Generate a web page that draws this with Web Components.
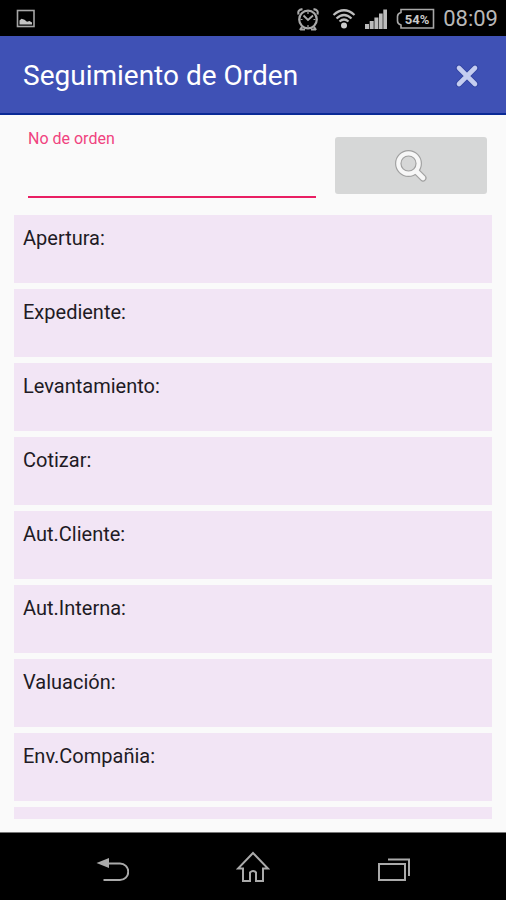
<!DOCTYPE html>
<html lang="es">
<head>
<meta charset="utf-8">
<meta name="viewport" content="width=device-width, initial-scale=1">
<title>Seguimiento de Orden</title>
<style>
  html, body { margin: 0; height: 100%; }
  body { font-family: Roboto, "Liberation Sans", sans-serif; background: #fafafa; color: #211a24; }
</style>
</head>
<body>
<order-app></order-app>
<script>
const define = (name, html, setup) => {
  const template = document.createElement('template');
  template.innerHTML = html;
  customElements.define(name, class extends HTMLElement {
    constructor() {
      super();
      this.attachShadow({ mode: 'open' }).append(template.content.cloneNode(true));
    }
    connectedCallback() { if (setup) setup(this, this.shadowRoot); }
  });
};

define('status-bar', `
<style>
  :host { display: flex; align-items: center; justify-content: space-between; height: 36px; padding: 1px 8px 0 16px; background: #000; color: #b8b8b8; flex: none; box-sizing: border-box; }
  div { display: flex; align-items: center; }
  svg { display: block; flex: none; }
  .right { gap: 8px; }
  time { font-size: 22px; line-height: 35px; }
</style>
<svg width="20" height="20" viewBox="0 0 20 20" aria-hidden="true"><rect x="1.5" y="1.5" width="16.5" height="16" fill="none" stroke="#a6a6a6" stroke-width="1.6"/><path d="M3.5 15.500v-4l2-1.800 3 1 2.500 2 2.500-.8 2.500 1.700v2z" fill="#c4c4c4"/></svg>
<div class="right">
  <svg width="24" height="24" viewBox="0 0 24 24" fill="none" stroke="#a8a8a8" stroke-width="2.200" aria-hidden="true"><circle cx="12" cy="12.500" r="8.800"/><path d="M2.500 7.500Q1 3 6.500 2.200M21.500 7.500Q23 3 17.500 2.200M6 20l-2 3M18 20l2 3M4 22.500h5M15 22.500h5"/><path d="M7.500 8.500l4.500 4.500 5-4.500" stroke-width="1.800"/><path d="M12 5v2M12 18v2M4.500 12.500h2M17.500 12.500h2" stroke-width="1.200"/></svg>
  <svg style="margin-left:4px" width="24" height="22" viewBox="0 0 24 22" fill="none" stroke="#bcbcbc" stroke-width="2.200" aria-hidden="true"><path d="M1.500 7Q12-2.500 22.500 7M4.500 10.500Q12 3.500 19.500 10.500M7.500 13.500Q12 9.500 16.500 13.500"/><circle cx="12" cy="17.500" r="3" fill="#ccc" stroke="none"/></svg>
  <svg width="24" height="22" viewBox="0 0 24 22" fill="#bcbcbc" aria-hidden="true"><path d="M1 16h4v5H1zM5.700 13h4v8h-4zM10.400 9.500h4V21h-4zM15 5.500h3.700V21H15zM19.300 1.500H23V21h-3.700z"/></svg>
  <svg width="39" height="22" viewBox="0 0 39 22" role="img" aria-label="54%"><path d="M5 1.500h32.500v18.500H5v-3Q1.500 16 1.500 13V8.500Q1.500 5.500 5 4.500z" fill="none" stroke="#a8a8a8" stroke-width="1.600"/><text x="21" y="16" text-anchor="middle" font-size="13" font-weight="700" fill="#c8c8c8">54%</text></svg>
  <time>08:09</time>
</div>`);

define('app-bar', `
<style>
  :host { display: flex; align-items: center; justify-content: space-between; height: 79px; padding: 2px 24px 0 23px; background: #3f51b5; border-bottom: 2px solid #0a2a96; box-sizing: border-box; color: #fff; flex: none; }
  h1 { margin: 0; font-size: 28px; line-height: 36px; font-weight: 400; }
  button { display: block; border: 0; padding: 0; background: none; cursor: pointer; }
  svg { display: block; }
</style>
<h1><slot></slot></h1>
<button type="button" aria-label="Cerrar"><svg width="30" height="30" viewBox="0 0 30 30" fill="none" stroke-linecap="round"><path d="M7 7l16 16M23 7L7 23" stroke="#3143a0" stroke-width="6.500"/><path d="M7 7l16 16M23 7L7 23" stroke="#c5cdf0" stroke-width="4.600"/></svg></button>`);

define('order-search', `
<style>
  :host { display: block; flex: none; }
  form { display: grid; grid-template-columns: 288fr 152fr; gap: 19px; margin: 0; padding: 14px 19px 17px 28px; }
  .field { display: flex; flex-direction: column; color: #f0437f; }
  label { font-size: 16px; line-height: 20px; }
  input { width: 100%; height: 49px; box-sizing: border-box; border: 0; border-bottom: 2px solid #e91e63; background: none; outline: none; padding: 0 0 4px; font: 22px/28px Roboto, sans-serif; border-radius: 0; color: #211a24; }
  button { height: 57px; margin-top: 8px; border: 0; border-radius: 3px; background: #d6d7d7; display: flex; align-items: center; justify-content: center; padding: 0; cursor: pointer; }
</style>
<form onsubmit="return false">
  <div class="field"><label for="order">No de orden</label><input id="order" type="text" autocomplete="off"></div>
  <button type="submit" aria-label="Buscar"><svg width="36" height="36" viewBox="0 0 36 36" fill="none" stroke-linecap="round"><g stroke="#a0a0a0"><circle cx="15.500" cy="15.500" r="10.200" stroke-width="6.500"/><path d="M24 24l6 6" stroke-width="7"/></g><g stroke="#f7f7f7"><circle cx="15.500" cy="15.500" r="10.200" stroke-width="4.200"/><path d="M23.500 23.500l6.500 6.500" stroke-width="4.600"/></g></svg></button>
</form>`);

define('stage-card', `
<style>
  :host { display: block; flex: none; min-height: 68px; box-sizing: border-box; padding: 11px 9px; background: #f2e5f5; font-size: 20px; line-height: 24px; }
</style>
<slot></slot>`);

define('stage-list', `
<style>
  :host { display: flex; flex-direction: column; gap: 6px; flex: 1; min-height: 0; overflow: hidden; margin: 0 14px 13px; }
</style>
<slot></slot>`);

define('nav-bar', `
<style>
  :host { display: grid; grid-template-columns: repeat(3, 1fr); height: 68px; flex: none; padding: 0 42px; background: #000; border-top: 1px solid #777; box-sizing: border-box; }
  button { border: 0; padding: 2px 0 0; background: none; display: flex; align-items: center; justify-content: center; cursor: pointer; }
  svg { fill: none; stroke: #aaa; stroke-width: 2; }
</style>
<button type="button" aria-label="Atrás"><svg width="34" height="34" viewBox="0 0 34 34"><path d="M13 12.500h12a8 8 0 0 1 0 16.500H8.500"/><path d="M1.500 12L14 7v10z" fill="#aaa" stroke="none"/></svg></button>
<button type="button" aria-label="Inicio"><svg width="34" height="34" viewBox="0 0 34 34"><path d="M17 2L2 17.500h5V30h7v-8.500q3-3 6 0V30h7V17.500h5z"/></svg></button>
<button type="button" aria-label="Recientes"><svg width="34" height="34" viewBox="0 0 34 34"><path d="M2 13h26v16H2zM11 8.500h21V25"/></svg></button>`);

define('order-app', `
<style>
  :host { display: flex; flex-direction: column; height: 100vh; overflow: hidden; background: #fafafa; }
</style>
<status-bar></status-bar>
<app-bar>Seguimiento de Orden</app-bar>
<order-search></order-search>
<stage-list></stage-list>
<nav-bar></nav-bar>`, (host, root) => {
  const list = root.querySelector('stage-list');
  const stages = ['Apertura:', 'Expediente:', 'Levantamiento:', 'Cotizar:', 'Aut.Cliente:', 'Aut.Interna:', 'Valuación:', 'Env.Compañia:', ''];
  list.replaceChildren(...stages.map(name => {
    const card = document.createElement('stage-card');
    card.textContent = name;
    return card;
  }));
});
</script>
</body>
</html>
